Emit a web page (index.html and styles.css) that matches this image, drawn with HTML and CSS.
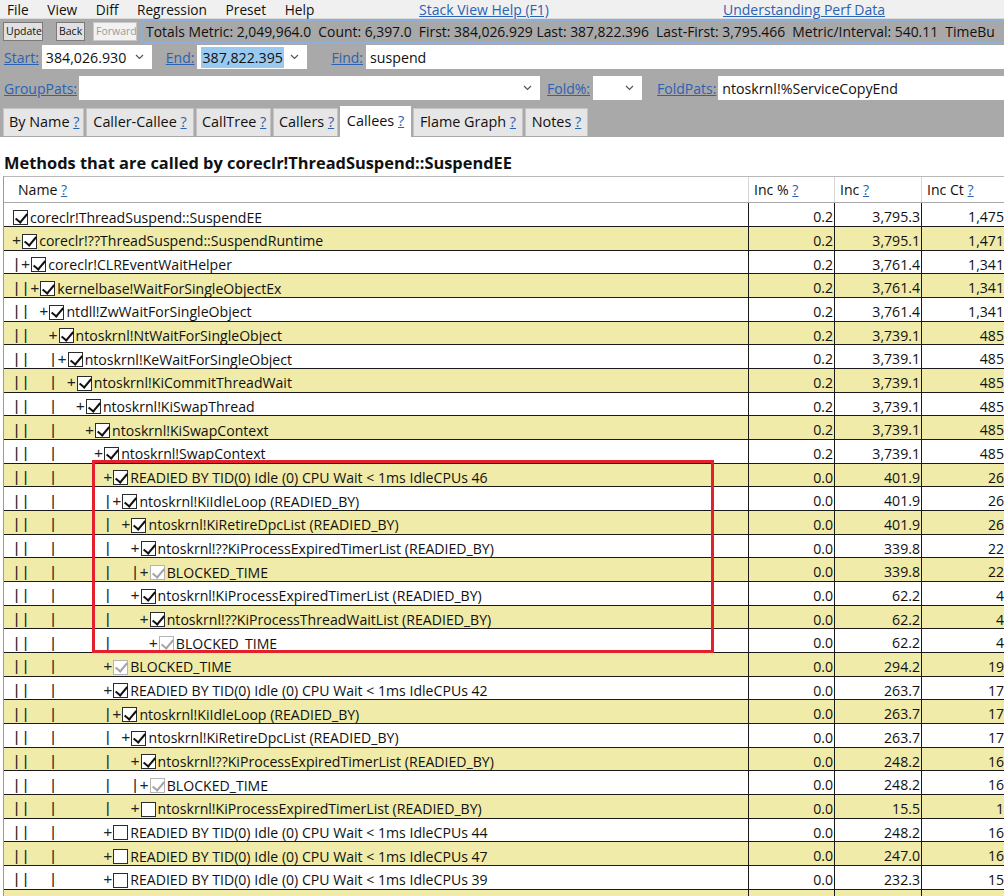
FILE: index.html
```html
<!DOCTYPE html>
<html>
<head>
<meta charset="utf-8">
<link rel="stylesheet" href="styles.css">
</head>
<body>
<div class="menubar">
  <div class="menu"><span>File</span><span>View</span><span>Diff</span><span>Regression</span><span>Preset</span><span>Help</span></div>
  <div class="helpcell"><a href="#">Stack View Help (F1)</a></div>
  <div class="helpcell"><a href="#">Understanding Perf Data</a></div>
</div>
<div class="panel">
  <div class="toolrow">
    <button class="btn b-update">Update</button>
    <button class="btn b-back">Back</button>
    <button class="btn b-fwd" disabled>Forward</button>
    <div class="status">Totals Metric: 2,049,964.0  Count: 6,397.0  First: 384,026.929 Last: 387,822.396  Last-First: 3,795.466  Metric/Interval: 540.11  TimeBu</div>
  </div>
  <div class="fieldrow r-start">
    <a href="#" class="lbl l-start">Start:</a>
    <div class="combo c-start"><span class="val">384,026.930</span><svg class="chev" width="9" height="6" viewBox="0 0 9 6"><path d="M1 1 L4.5 4.5 L8 1" fill="none" stroke="#555" stroke-width="1.2"/></svg></div>
    <a href="#" class="lbl l-end">End:</a>
    <div class="combo c-end"><span class="val"><span class="sel">387,822.395</span></span><svg class="chev" width="9" height="6" viewBox="0 0 9 6"><path d="M1 1 L4.5 4.5 L8 1" fill="none" stroke="#555" stroke-width="1.2"/></svg></div>
    <a href="#" class="lbl l-find">Find:</a>
    <div class="textbox t-find">suspend</div>
  </div>
  <div class="fieldrow r-group">
    <a href="#" class="lbl l-group">GroupPats:</a>
    <div class="combo c-group"><span class="val"></span><svg class="chev" width="9" height="6" viewBox="0 0 9 6"><path d="M1 1 L4.5 4.5 L8 1" fill="none" stroke="#555" stroke-width="1.2"/></svg></div>
    <a href="#" class="lbl l-fold">Fold%:</a>
    <div class="combo c-fold"><span class="val"></span><svg class="chev" width="9" height="6" viewBox="0 0 9 6"><path d="M1 1 L4.5 4.5 L8 1" fill="none" stroke="#555" stroke-width="1.2"/></svg></div>
    <a href="#" class="lbl l-foldpats">FoldPats:</a>
    <div class="textbox t-foldpats">ntoskrnl!%ServiceCopyEnd</div>
  </div>
  <div class="tabs">
    <div class="tab t-byname">By Name <a href="#">?</a></div>
    <div class="tab t-cc">Caller-Callee <a href="#">?</a></div>
    <div class="tab t-tree">CallTree <a href="#">?</a></div>
    <div class="tab t-callers">Callers <a href="#">?</a></div>
    <div class="tab t-callees active">Callees <a href="#">?</a></div>
    <div class="tab t-flame">Flame Graph <a href="#">?</a></div>
    <div class="tab t-notes">Notes <a href="#">?</a></div>
  </div>
</div>
<h1 class="title">Methods that are called by coreclr!ThreadSuspend::SuspendEE</h1>
<div class="grid">
  <div class="hdr">
    <div class="c name">Name <a href="#">?</a></div>
    <div class="c pct">Inc % <a href="#">?</a></div>
    <div class="c inc">Inc <a href="#">?</a></div>
    <div class="c cnt">Inc Ct <a href="#">?</a></div>
  </div>
  <div class="row"><div class="c name"><span class="ind"></span><span class="cb on"></span><span class="nm">coreclr!ThreadSuspend::SuspendEE</span></div><div class="c pct">0.2</div><div class="c inc">3,795.3</div><div class="c cnt">1,475</div></div>
  <div class="row alt"><div class="c name"><span class="ind">+</span><span class="cb on"></span><span class="nm">coreclr!??ThreadSuspend::SuspendRuntime</span></div><div class="c pct">0.2</div><div class="c inc">3,795.1</div><div class="c cnt">1,471</div></div>
  <div class="row"><div class="c name"><span class="ind">|+</span><span class="cb on"></span><span class="nm">coreclr!CLREventWaitHelper</span></div><div class="c pct">0.2</div><div class="c inc">3,761.4</div><div class="c cnt">1,341</div></div>
  <div class="row alt"><div class="c name"><span class="ind">||+</span><span class="cb on"></span><span class="nm">kernelbase!WaitForSingleObjectEx</span></div><div class="c pct">0.2</div><div class="c inc">3,761.4</div><div class="c cnt">1,341</div></div>
  <div class="row"><div class="c name"><span class="ind">|| +</span><span class="cb on"></span><span class="nm">ntdll!ZwWaitForSingleObject</span></div><div class="c pct">0.2</div><div class="c inc">3,761.4</div><div class="c cnt">1,341</div></div>
  <div class="row alt"><div class="c name"><span class="ind">||  +</span><span class="cb on"></span><span class="nm">ntoskrnl!NtWaitForSingleObject</span></div><div class="c pct">0.2</div><div class="c inc">3,739.1</div><div class="c cnt">485</div></div>
  <div class="row"><div class="c name"><span class="ind">||  |+</span><span class="cb on"></span><span class="nm">ntoskrnl!KeWaitForSingleObject</span></div><div class="c pct">0.2</div><div class="c inc">3,739.1</div><div class="c cnt">485</div></div>
  <div class="row alt"><div class="c name"><span class="ind">||  | +</span><span class="cb on"></span><span class="nm">ntoskrnl!KiCommitThreadWait</span></div><div class="c pct">0.2</div><div class="c inc">3,739.1</div><div class="c cnt">485</div></div>
  <div class="row"><div class="c name"><span class="ind">||  |  +</span><span class="cb on"></span><span class="nm">ntoskrnl!KiSwapThread</span></div><div class="c pct">0.2</div><div class="c inc">3,739.1</div><div class="c cnt">485</div></div>
  <div class="row alt"><div class="c name"><span class="ind">||  |   +</span><span class="cb on"></span><span class="nm">ntoskrnl!KiSwapContext</span></div><div class="c pct">0.2</div><div class="c inc">3,739.1</div><div class="c cnt">485</div></div>
  <div class="row"><div class="c name"><span class="ind">||  |    +</span><span class="cb on"></span><span class="nm">ntoskrnl!SwapContext</span></div><div class="c pct">0.2</div><div class="c inc">3,739.1</div><div class="c cnt">485</div></div>
  <div class="row alt"><div class="c name"><span class="ind">||  |     +</span><span class="cb on"></span><span class="nm">READIED BY TID(0) Idle (0) CPU Wait &lt; 1ms IdleCPUs 46</span></div><div class="c pct">0.0</div><div class="c inc">401.9</div><div class="c cnt">26</div></div>
  <div class="row"><div class="c name"><span class="ind">||  |     |+</span><span class="cb on"></span><span class="nm">ntoskrnl!KiIdleLoop (READIED_BY)</span></div><div class="c pct">0.0</div><div class="c inc">401.9</div><div class="c cnt">26</div></div>
  <div class="row alt"><div class="c name"><span class="ind">||  |     | +</span><span class="cb on"></span><span class="nm">ntoskrnl!KiRetireDpcList (READIED_BY)</span></div><div class="c pct">0.0</div><div class="c inc">401.9</div><div class="c cnt">26</div></div>
  <div class="row"><div class="c name"><span class="ind">||  |     |  +</span><span class="cb on"></span><span class="nm">ntoskrnl!??KiProcessExpiredTimerList (READIED_BY)</span></div><div class="c pct">0.0</div><div class="c inc">339.8</div><div class="c cnt">22</div></div>
  <div class="row alt"><div class="c name"><span class="ind">||  |     |  |+</span><span class="cb dis"></span><span class="nm">BLOCKED_TIME</span></div><div class="c pct">0.0</div><div class="c inc">339.8</div><div class="c cnt">22</div></div>
  <div class="row"><div class="c name"><span class="ind">||  |     |  +</span><span class="cb on"></span><span class="nm">ntoskrnl!KiProcessExpiredTimerList (READIED_BY)</span></div><div class="c pct">0.0</div><div class="c inc">62.2</div><div class="c cnt">4</div></div>
  <div class="row alt"><div class="c name"><span class="ind">||  |     |   +</span><span class="cb on"></span><span class="nm">ntoskrnl!??KiProcessThreadWaitList (READIED_BY)</span></div><div class="c pct">0.0</div><div class="c inc">62.2</div><div class="c cnt">4</div></div>
  <div class="row"><div class="c name"><span class="ind">||  |     |    +</span><span class="cb dis"></span><span class="nm">BLOCKED_TIME</span></div><div class="c pct">0.0</div><div class="c inc">62.2</div><div class="c cnt">4</div></div>
  <div class="row alt"><div class="c name"><span class="ind">||  |     +</span><span class="cb dis"></span><span class="nm">BLOCKED_TIME</span></div><div class="c pct">0.0</div><div class="c inc">294.2</div><div class="c cnt">19</div></div>
  <div class="row"><div class="c name"><span class="ind">||  |     +</span><span class="cb on"></span><span class="nm">READIED BY TID(0) Idle (0) CPU Wait &lt; 1ms IdleCPUs 42</span></div><div class="c pct">0.0</div><div class="c inc">263.7</div><div class="c cnt">17</div></div>
  <div class="row alt"><div class="c name"><span class="ind">||  |     |+</span><span class="cb on"></span><span class="nm">ntoskrnl!KiIdleLoop (READIED_BY)</span></div><div class="c pct">0.0</div><div class="c inc">263.7</div><div class="c cnt">17</div></div>
  <div class="row"><div class="c name"><span class="ind">||  |     | +</span><span class="cb on"></span><span class="nm">ntoskrnl!KiRetireDpcList (READIED_BY)</span></div><div class="c pct">0.0</div><div class="c inc">263.7</div><div class="c cnt">17</div></div>
  <div class="row alt"><div class="c name"><span class="ind">||  |     |  +</span><span class="cb on"></span><span class="nm">ntoskrnl!??KiProcessExpiredTimerList (READIED_BY)</span></div><div class="c pct">0.0</div><div class="c inc">248.2</div><div class="c cnt">16</div></div>
  <div class="row"><div class="c name"><span class="ind">||  |     |  |+</span><span class="cb dis"></span><span class="nm">BLOCKED_TIME</span></div><div class="c pct">0.0</div><div class="c inc">248.2</div><div class="c cnt">16</div></div>
  <div class="row alt"><div class="c name"><span class="ind">||  |     |  +</span><span class="cb"></span><span class="nm">ntoskrnl!KiProcessExpiredTimerList (READIED_BY)</span></div><div class="c pct">0.0</div><div class="c inc">15.5</div><div class="c cnt">1</div></div>
  <div class="row"><div class="c name"><span class="ind">||  |     +</span><span class="cb"></span><span class="nm">READIED BY TID(0) Idle (0) CPU Wait &lt; 1ms IdleCPUs 44</span></div><div class="c pct">0.0</div><div class="c inc">248.2</div><div class="c cnt">16</div></div>
  <div class="row alt"><div class="c name"><span class="ind">||  |     +</span><span class="cb"></span><span class="nm">READIED BY TID(0) Idle (0) CPU Wait &lt; 1ms IdleCPUs 47</span></div><div class="c pct">0.0</div><div class="c inc">247.0</div><div class="c cnt">16</div></div>
  <div class="row"><div class="c name"><span class="ind">||  |     +</span><span class="cb"></span><span class="nm">READIED BY TID(0) Idle (0) CPU Wait &lt; 1ms IdleCPUs 39</span></div><div class="c pct">0.0</div><div class="c inc">232.3</div><div class="c cnt">15</div></div>
  <div class="row alt"><div class="c name"></div><div class="c pct"></div><div class="c inc"></div><div class="c cnt"></div></div>
  <div class="highlight"></div>
</div>
</body>
</html>
```
FILE: styles.css
```css
* { box-sizing: border-box; }
html, body { margin: 0; padding: 0; }
body {
  width: 1004px;
  height: 896px;
  overflow: hidden;
  font-family: "Open Sans", "Noto Sans", sans-serif;
  font-size: 14.1px;
  color: #111;
  background: #fff;
}
a { color: #2a62b4; text-decoration: underline; }

/* menu bar */
.menubar {
  display: flex;
  height: 19px;
  background: #f0f0f0;
  border-bottom: 1px solid #dcdcdc;
  align-items: center;
  font-size: 13.7px;
  white-space: nowrap;
}
.menu { display: flex; width: 324px; }
.menu span { padding: 0 9.3px; }
.menu span:first-child { padding-left: 7px; }
.helpcell { width: 320px; text-align: center; font-size: 14px; }

/* grey panel */
.panel {
  background: #a9a9a9;
  height: 118px;
}
.toolrow {
  display: flex;
  align-items: center;
  height: 24px;
  white-space: nowrap;
}
.btn {
  font-family: "Open Sans", sans-serif;
  font-size: 10.5px;
  height: 19px;
  padding: 0 2px;
  background: #e1e1e1;
  border: 1px solid #7a7a7a;
  color: #111;
  line-height: 15px;
}
.b-update { margin-left: 3px; width: 40px; }
.b-back { margin-left: 13px; width: 29px; }
.b-fwd { margin-left: 8px; width: 44px; color: #9a9a9a; background: #f2f2f2; border-color: #c8c8c8; }
.status {
  margin-left: 5px;
  flex: 1;
  height: 23px;
  border-top: 1px solid #8fb0d8;
  border-bottom: 1px solid #8fb0d8;
  border-left: 1px solid #8fb0d8;
  background: #a8a8a8;
  padding-left: 3px;
  line-height: 21px;
  white-space: pre;
  overflow: hidden;
  font-size: 13.9px;
  color: #111;
}

.fieldrow {
  display: flex;
  align-items: center;
  height: 24px;
  white-space: nowrap;
}
.r-start { margin-top: 2px; }
.r-group { margin-top: 7px; }
.lbl { font-size: 14px; }
.combo, .textbox {
  background: #fff;
  height: 24px;
  display: flex;
  align-items: center;
  font-size: 14.2px;
  color: #111;
}
.combo .val { flex: 1; padding-left: 4px; }
.combo .chev { margin-right: 8px; }
.sel { background: #99c9ef; padding: 1px 1px; }
.textbox { padding-left: 4px; flex: 1; }

.l-start { margin-left: 4px; }
.c-start { margin-left: 3px; width: 110px; }
.l-end { margin-left: 14px; }
.c-end { margin-left: 3px; width: 110px; }
.l-find { margin-left: 24px; }
.t-find { margin-left: 3px; }
.l-group { margin-left: 4px; }
.c-group { margin-left: 2px; width: 461px; }
.l-fold { margin-left: 7px; }
.c-fold { margin-left: 3px; width: 49px; }
.l-foldpats { margin-left: 15px; }
.t-foldpats { margin-left: 2px; }

.tabs {
  display: flex;
  align-items: flex-end;
  margin-top: 6px;
  padding-left: 3px;
  height: 30px;
  gap: 2px;
}
.tab {
  height: 28px;
  padding: 0 5px;
  background: #e6e6e6;
  border: 1px solid #c4c4c4;
  border-bottom: none;
  font-size: 14.4px;
  line-height: 26px;
  white-space: nowrap;
  text-align: center;
}
.t-byname { width: 81px; }
.t-cc { width: 108px; }
.t-tree { width: 75px; }
.t-callers { width: 65px; }
.t-callees { width: 71px; }
.t-flame { width: 110px; }
.t-notes { width: 63px; }
.tab.active {
  height: 31px;
  background: #fff;
  border-color: #fff;
  line-height: 27px;
  margin-bottom: -1px;
}

.title {
  margin: 13px 0 0 4px;
  font-size: 16.4px;
  font-weight: 700;
  height: 26px;
  line-height: 26px;
  color: #111;
  white-space: nowrap;
}

/* grid */
.grid {
  position: relative;
  margin-left: 3px;
  border-left: 1px solid #9a9a9a;
  border-top: 1px solid #b8b8b8;
  width: 1010px;
}
.hdr {
  display: flex;
  height: 26.2px;
  border-bottom: 1px solid #a8a8a8;
  background: #fff;
}
.hdr .c {
  line-height: 25px;
  border-right: 1px solid #d6d6d6;
  padding-left: 5px;
  overflow: hidden;
}
.hdr .name { padding-left: 14px; }
.row {
  display: flex;
  height: 23.68px;
  border-bottom: 1px solid #1a1a1a;
  background: #fff;
}
.row.alt { background: #f0eba8; }
.c { flex: none; white-space: nowrap; }
.name { width: 745px; }
.pct { width: 86px; }
.inc { width: 87px; }
.cnt { width: 90px; }
.row .c {
  border-right: 1px solid #1a1a1a;
  line-height: 16px;
  padding-top: 6px;
}
.row .pct, .row .inc, .row .cnt { text-align: right; padding-right: 1px; }
.row .cnt { border-right: none; padding-right: 8px; }
.row .name {
  display: flex;
  align-items: center;
  padding-left: 8px;
  padding-top: 6px;
}
.ind {
  font-family: "Liberation Mono", monospace;
  font-size: 15.2px;
  white-space: pre;
  color: #222;
  line-height: 16px;
}
.nm { line-height: 16px; color: #111; }
.cb {
  flex: none;
  position: relative;
  width: 15px;
  height: 15px;
  margin-left: 1px;
  margin-right: 2px;
  border: 1px solid #2b2b2b;
  background: #fff;
}
.cb.on::after, .cb.dis::after {
  content: "";
  position: absolute;
  left: 4px;
  top: -0.5px;
  width: 5px;
  height: 10px;
  border-right: 2.8px solid #111;
  border-bottom: 2.8px solid #111;
  transform: rotate(40deg);
}
.cb.dis { border-color: #b4b4b4; }
.cb.dis::after { border-color: #a4a4a4; }

.highlight {
  position: absolute;
  left: 88px;
  top: 283px;
  width: 622px;
  height: 193px;
  border: 3px solid #e3202b;
  pointer-events: none;
}
```
